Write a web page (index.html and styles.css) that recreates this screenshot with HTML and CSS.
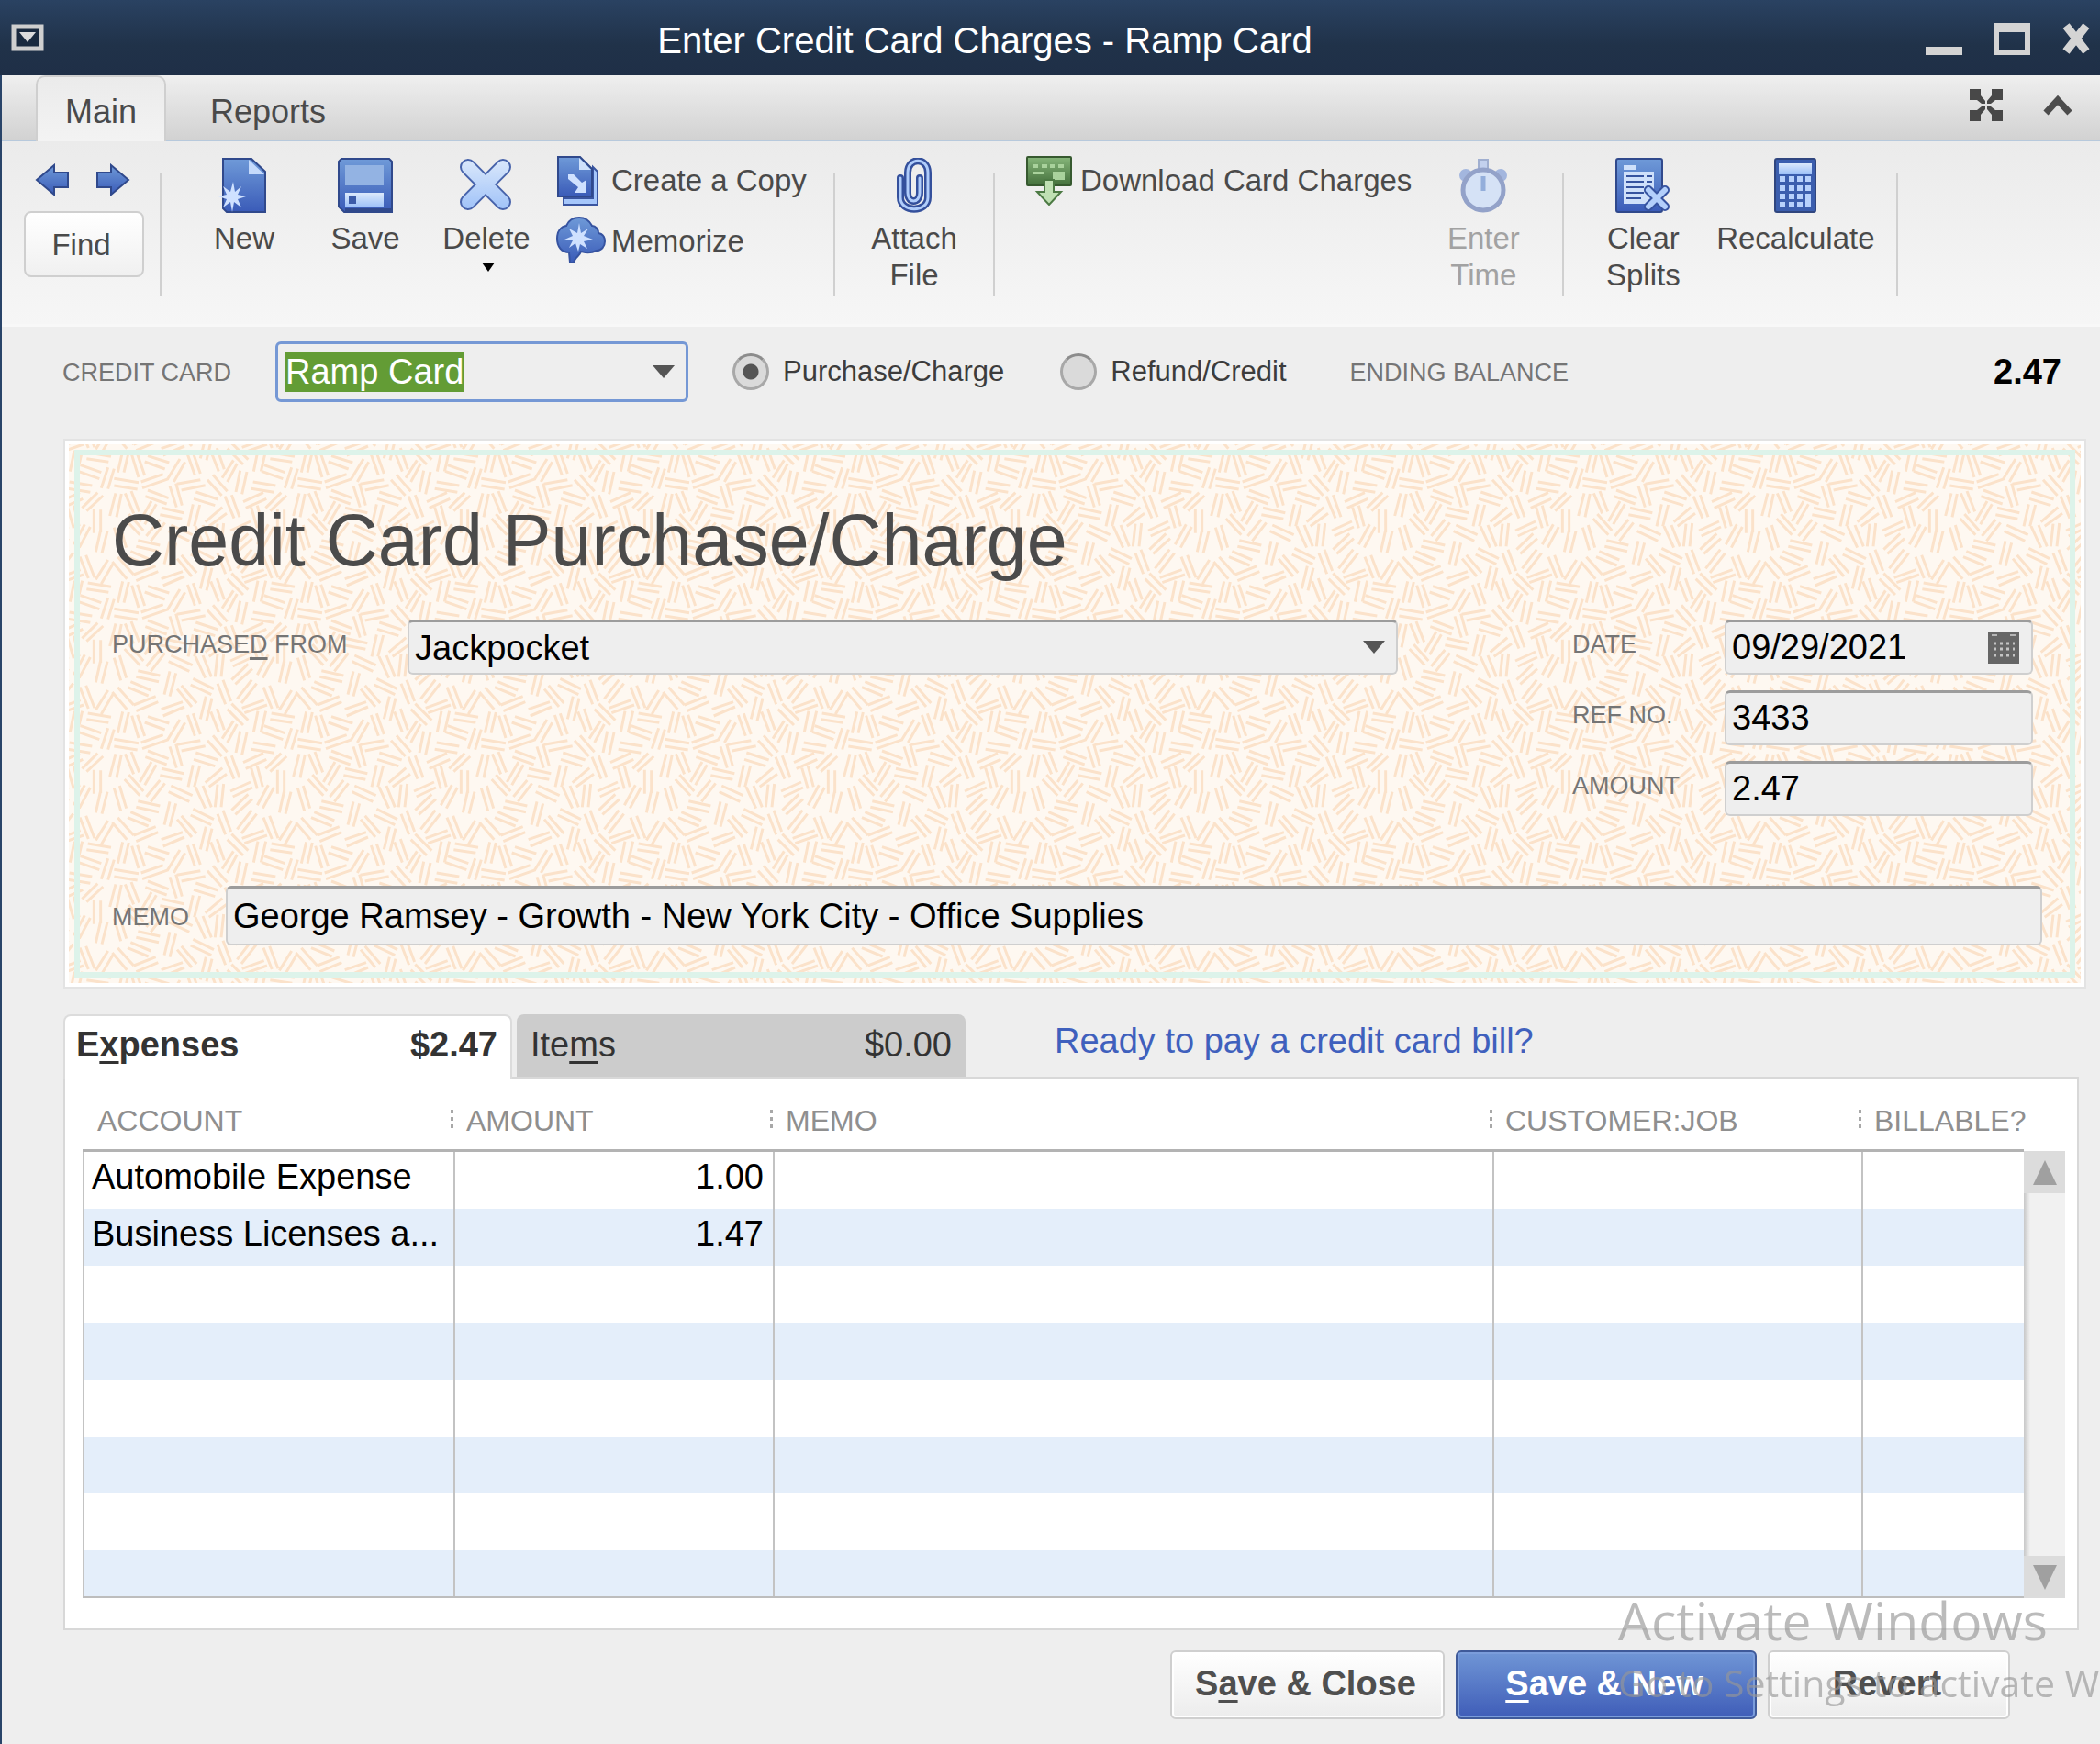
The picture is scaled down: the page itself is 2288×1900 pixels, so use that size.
FILE: index.html
```html
<!DOCTYPE html>
<html lang="en">

<head>
	<meta charset="utf-8">
	<meta name="viewport" content="width=device-width,initial-scale=1">
	<title>Enter Credit Card Charges - Ramp Card</title>
	<link rel="stylesheet" href="styles.css">
</head>

<body>
	<!-- shared icon gradients -->
	<svg class="defs" width="0" height="0" aria-hidden="true">
		<defs>
			<linearGradient id="blue" x1="0" y1="0" x2="0" y2="1">
				<stop offset="0" stop-color="#6f9ad8" />
				<stop offset="1" stop-color="#3a5bb8" />
			</linearGradient>
			<linearGradient id="light" x1="0" y1="0" x2="0" y2="1">
				<stop offset="0" stop-color="#dce9fb" />
				<stop offset="1" stop-color="#9cc0f8" />
			</linearGradient>
			<linearGradient id="cross" gradientUnits="userSpaceOnUse" x1="0" y1="0" x2="0" y2="60">
				<stop offset="0" stop-color="#dce9fb" />
				<stop offset="1" stop-color="#9cc0f8" />
			</linearGradient>
			<linearGradient id="green" x1="0" y1="0" x2="0" y2="1">
				<stop offset="0" stop-color="#86b67a" />
				<stop offset="1" stop-color="#44703c" />
			</linearGradient>
		</defs>
	</svg>

	<div class="window">
		<header class="titlebar">
			<button class="title-btn" aria-label="Window menu">
				<svg width="36" height="30" viewBox="0 0 36 30">
					<rect x="3" y="3" width="30" height="24" fill="#1a2a3f" stroke="#cfcfcf" stroke-width="5" />
					<path d="M9 9H27L18 20Z" fill="#dcdcdc" />
				</svg>
			</button>
			<h1>Enter Credit Card Charges - Ramp Card</h1>
			<div class="title-controls">
				<button class="title-btn" aria-label="Minimize">
					<svg width="40" height="38" viewBox="0 0 40 38"><rect y="26" width="40" height="9" fill="#d4d4d4" /></svg>
				</button>
				<button class="title-btn" aria-label="Maximize">
					<svg width="40" height="38" viewBox="0 0 40 38"><path d="M0 0H40V35H0ZM6 10V30H34V10Z" fill="#d4d4d4" fill-rule="evenodd" /></svg>
				</button>
				<button class="title-btn" aria-label="Close">
					<svg width="32" height="38" viewBox="0 0 32 38"><path d="M5 3L27 31M27 3L5 31" stroke="#d4d4d4" stroke-width="9" /></svg>
				</button>
			</div>
		</header>

		<nav class="tabstrip">
			<button class="tab active">Main</button>
			<button class="tab">Reports</button>
			<div class="strip-tools">
				<button class="plain" aria-label="Expand">
					<svg width="36" height="36" viewBox="0 0 36 36" fill="#484848">
						<path d="M0 0H12V7L17 13V16H13L8 12H0ZM36 0H24V7L19 13V16H23L28 12H36ZM0 35H12V28L17 22V19H13L8 23H0ZM36 35H24V28L19 22V19H23L28 23H36Z" />
					</svg>
				</button>
				<button class="plain" aria-label="Collapse ribbon">
					<svg width="32" height="24" viewBox="0 0 32 24"><path d="M3 20L16 6L29 20" fill="none" stroke="#4c4c4c" stroke-width="7" /></svg>
				</button>
			</div>
		</nav>

		<div class="toolbar">
			<div class="nav-group">
				<div class="arrows">
					<button class="plain" aria-label="Previous">
						<svg width="38" height="36" viewBox="0 0 38 36"><path d="M2 18L21 2V10H36V26H21V34Z" fill="url(#blue)" stroke="#30498c" stroke-width="2" /></svg>
					</button>
					<button class="plain" aria-label="Next">
						<svg width="38" height="36" viewBox="0 0 38 36"><path d="M36 18L17 2V10H2V26H17V34Z" fill="url(#blue)" stroke="#30498c" stroke-width="2" /></svg>
					</button>
				</div>
				<button class="find">Find</button>
			</div>
			<span class="sep"></span>
			<div class="group">
				<button class="tool">
					<svg width="56" height="60" viewBox="0 0 56 60">
						<path d="M5 1H36L51 15V59H9L5 55Z" fill="url(#blue)" stroke="#30498c" stroke-width="2" />
						<path d="M33 2L50 18H33Z" fill="#c5dafb" />
						<path d="M16 26L18 37L25 31L21 40L30 42L21 45L25 54L17 48L15 59L13 48L5 54L9 45L0 42L9 40L5 31L13 37Z" fill="#cfe1ff" />
					</svg>
					New
				</button>
				<button class="tool">
					<svg width="60" height="60" viewBox="0 0 60 60">
						<path d="M1 4L4 1H56L59 4V59H7L1 53Z" fill="url(#blue)" stroke="#30498c" stroke-width="2" />
						<rect x="8" y="8" width="42" height="22" fill="#93b3e3" />
						<rect x="8" y="38" width="42" height="16" fill="url(#light)" />
						<rect x="12" y="42" width="8" height="8" fill="#3c5ba8" />
						<rect x="8" y="55" width="50" height="3" fill="#30498c" />
					</svg>
					Save
				</button>
				<button class="tool">
					<svg width="60" height="60" viewBox="0 0 60 60" stroke-linecap="round">
						<path d="M10 10L48 48M48 10L10 48" stroke="#4763ab" stroke-width="18" />
						<path d="M10 10L48 48M48 10L10 48" stroke="url(#cross)" stroke-width="14" />
					</svg>
					Delete
					<svg class="caret" width="14" height="10" viewBox="0 0 14 10"><path d="M0 0H14L7 10Z" /></svg>
				</button>
			</div>
			<div class="stack">
				<button class="tool-row">
					<svg width="54" height="54" viewBox="0 0 54 54">
						<path d="M8 46V53H45V17L40 12V46Z" fill="#a5c6fb" stroke="#3a55a0" stroke-width="2" />
						<path d="M2 1H26L39 14V44H2Z" fill="url(#blue)" stroke="#30498c" stroke-width="2" />
						<path d="M25 2L38 15H25Z" fill="#cfe1fb" />
						<path d="M13 20L19 20L28 29L33 26V40H20L24 34L13 25Z" fill="#cfe1ff" />
					</svg>
					Create a Copy
				</button>
				<button class="tool-row">
					<svg width="54" height="54" viewBox="0 0 54 54">
						<path d="M15 50L14 39C6 39 1 33 1 24C1 16 5 11 11 10C14 3 19 1 25 1C31 1 36 4 39 10C43 10 46 14 46 18C51 19 53 22 53 27C53 33 49 37 44 37C36 41 31 39 27 38C26 42 20 45 19 50Z" fill="url(#blue)" stroke="#3653a0" stroke-width="2" />
						<path d="M25 7L27 18L35 13L30 21L40 25L30 27L34 35L26 30L24 38L21 29L14 34L18 26L9 25L18 21L14 13L23 18Z" fill="#cfe1ff" />
					</svg>
					Memorize
				</button>
			</div>
			<span class="sep"></span>
			<div class="group attach">
				<button class="tool">
					<svg width="40" height="60" viewBox="0 0 40 60" fill="none" stroke-linecap="round">
						<path d="M5 22V43C5 60 35 60 35 43V16C35 -1 13 -1 13 16V38C13 50 26 50 26 38V22" stroke="#34509c" stroke-width="8" />
						<path d="M5 22V43C5 60 35 60 35 43V16C35 -1 13 -1 13 16V38C13 50 26 50 26 38V22" stroke="#b0cdfb" stroke-width="3" />
					</svg>
					Attach<br>File
				</button>
			</div>
			<span class="sep"></span>
			<div class="group charges">
				<button class="tool-row">
					<svg width="54" height="54" viewBox="0 0 54 54">
						<rect x="2" y="1" width="48" height="31" rx="1" fill="url(#green)" stroke="#36592f" stroke-width="2" />
						<path d="M8 9H14V13H8ZM18 9H24V13H18ZM27 9H32V13H27ZM36 9H42V13H36ZM8 17H20V20H8ZM30 17H43V26H30Z" fill="#a9d29c" />
						<path d="M21 26H31V39H39L26 53L13 39H21Z" fill="#bfe0b3" stroke="#4c7a44" stroke-width="2" />
					</svg>
					Download Card Charges
				</button>
				<button class="tool" disabled>
					<svg width="56" height="60" viewBox="0 0 56 60">
						<path d="M23 2H33V14H23Z" fill="#c3d1ee" stroke="#a0afd0" stroke-width="2" />
						<circle cx="9" cy="19" r="7" fill="#a3b6de" />
						<circle cx="47" cy="19" r="7" fill="#a3b6de" />
						<ellipse cx="28" cy="35" rx="22" ry="22" fill="#d5e2f6" stroke="#93a2c9" stroke-width="5" />
						<path d="M28 20V36" stroke="#93aedb" stroke-width="5" />
					</svg>
					Enter<br>Time
				</button>
			</div>
			<span class="sep"></span>
			<div class="group splits">
				<button class="tool">
					<svg width="60" height="60" viewBox="0 0 60 60">
						<rect x="1" y="1" width="50" height="58" rx="2" fill="url(#blue)" stroke="#30498c" stroke-width="2" />
						<path d="M9 8H22V13H9ZM9 15H42V50H9Z" fill="#cfe0fa" />
						<path d="M12 20H31M34 20H40M12 26H31M34 26H40M12 32H31M34 32H38M12 38H31M12 44H28" stroke="#36539f" stroke-width="2" />
						<g stroke-linecap="round">
							<path d="M36 35L54 53M54 35L36 53" stroke="#3653a0" stroke-width="10" />
							<path d="M36 35L54 53M54 35L36 53" stroke="#b3cffb" stroke-width="6" />
						</g>
					</svg>
					Clear<br>Splits
				</button>
				<button class="tool">
					<svg width="46" height="60" viewBox="0 0 46 60">
						<rect x="1" y="1" width="44" height="58" rx="2" fill="#3b5eae" stroke="#30467f" stroke-width="2" />
						<rect x="5" y="6" width="36" height="12" fill="url(#light)" />
						<path d="M6 20H12V26H6ZM16 20H22V26H16ZM25 20H31V26H25ZM34 20H40V26H34ZM6 30H12V36H6ZM16 30H22V36H16ZM25 30H31V36H25ZM34 30H40V36H34ZM6 39H12V45H6ZM16 39H22V45H16ZM25 39H31V45H25ZM6 48H12V54H6ZM16 48H22V54H16ZM25 48H31V54H25ZM34 39H40V54H34Z" fill="#b7d1fc" />
					</svg>
					Recalculate
				</button>
			</div>
			<span class="sep"></span>
		</div>

		<div class="card-row">
			<label class="caption" for="card">CREDIT CARD</label>
			<div class="combo focused">
				<input id="card" type="text" role="combobox" aria-expanded="false" value="Ramp Card">
				<button class="plain drop" aria-label="Choose card"></button>
			</div>
			<label class="radio"><input type="radio" name="kind" checked>Purchase/Charge</label>
			<label class="radio"><input type="radio" name="kind">Refund/Credit</label>
			<span class="caption">ENDING BALANCE</span>
			<strong class="balance">2.47</strong>
		</div>

		<section class="charge">
			<div class="paper">
				<div class="frame">
					<h2>Credit Card Purchase/Charge</h2>
					<div class="fields">
						<label class="caption vendor-label" for="vendor">PURCHASE<u>D</u> FROM</label>
						<div class="vendor">
							<select id="vendor" class="field">
								<option>Jackpocket</option>
							</select>
						</div>
						<div class="details">
							<label class="caption" for="date">DATE</label>
							<div class="field date">
								<input id="date" type="text" value="09/29/2021">
								<button class="plain" aria-label="Pick date">
									<svg width="34" height="34" viewBox="0 0 34 34">
										<path d="M0 0H34V34H0Z" fill="#666" />
										<path d="M4 3H10M24 3H30" stroke="#b5b5b5" stroke-width="2" />
										<path d="M6 12H29M6 18H29M6 25H29" stroke="#c4c4c4" stroke-width="3" stroke-dasharray="3 4" />
									</svg>
								</button>
							</div>
							<label class="caption" for="refno">REF NO.</label>
							<input id="refno" class="field" type="text" value="3433">
							<label class="caption" for="amount">AMOUNT</label>
							<input id="amount" class="field" type="text" value="2.47">
						</div>
					</div>
					<div class="memo-row">
						<label class="caption" for="memo">MEMO</label>
						<input id="memo" class="field" type="text" value="George Ramsey - Growth - New York City - Office Supplies">
					</div>
				</div>
			</div>
		</section>

		<div class="split-tabs">
			<button class="split-tab active"><span>E<u>x</u>penses</span><span>$2.47</span></button>
			<button class="split-tab"><span>Ite<u>m</u>s</span><span>$0.00</span></button>
			<a href="#">Ready to pay a credit card bill?</a>
		</div>
		<section class="split-panel">
			<div class="grid">
				<table>
					<thead>
						<tr>
							<th class="col-account">ACCOUNT</th>
							<th class="col-amount">AMOUNT</th>
							<th class="col-memo">MEMO</th>
							<th class="col-job">CUSTOMER:JOB</th>
							<th class="col-billable">BILLABLE?</th>
						</tr>
					</thead>
					<tbody>
						<tr><td>Automobile Expense</td><td class="num">1.00</td><td></td><td></td><td></td></tr>
						<tr><td>Business Licenses a...</td><td class="num">1.47</td><td></td><td></td><td></td></tr>
						<tr><td></td><td></td><td></td><td></td><td></td></tr>
						<tr><td></td><td></td><td></td><td></td><td></td></tr>
						<tr><td></td><td></td><td></td><td></td><td></td></tr>
						<tr><td></td><td></td><td></td><td></td><td></td></tr>
						<tr><td></td><td></td><td></td><td></td><td></td></tr>
						<tr><td></td><td></td><td></td><td></td><td></td></tr>
					</tbody>
				</table>
			</div>
			<div class="scrollbar">
				<button class="plain" aria-label="Scroll up"><svg width="26" height="27" viewBox="0 0 26 27"><path d="M13 0L26 27H0Z" fill="#a0a0a0" /></svg></button>
				<button class="plain" aria-label="Scroll down"><svg width="26" height="27" viewBox="0 0 26 27"><path d="M13 27L26 0H0Z" fill="#a0a0a0" /></svg></button>
			</div>
		</section>

		<footer class="actions">
			<button class="action close">S<u>a</u>ve &amp; Close</button>
			<button class="action primary"><u>S</u>ave &amp; New</button>
			<button class="action revert">Revert</button>
		</footer>
	</div>

	<div class="activate">
		<div class="activate-title">Activate Windows</div>
		<div class="activate-text">Go to Settings to activate Windows.</div>
	</div>

	<script src="script.js"></script>
</body>

</html>
```
FILE: styles.css
```css
* {
	box-sizing: border-box;
}

body {
	margin: 0;
	background: #eee;
	color: #4a4a4a;
	font-family: "Liberation Sans", Arial, sans-serif;
	font-size: 33px;
	overflow: hidden;
}

button,
input,
select {
	font: inherit;
	color: inherit;
	margin: 0;
}

button {
	cursor: pointer;
}

svg {
	display: block;
}

u {
	text-decoration-thickness: 3px;
	text-underline-offset: 5px;
}

.defs {
	position: absolute;
}

.window {
	display: flex;
	flex-direction: column;
	min-height: 100vh;
	border-left: 2px solid #294469;
}

.plain,
.title-btn {
	padding: 0;
	border: 0;
	background: none;
}

/* title bar */
.titlebar {
	display: flex;
	align-items: center;
	height: 82px;
	margin-left: -2px;
	padding: 0 10px 0 12px;
	background: linear-gradient(#2a4262, #203249 60%, #1f2f47);
}

.titlebar h1 {
	flex: 1;
	margin: 0;
	padding-top: 6px;
	color: #fff;
	font-size: 40px;
	font-weight: normal;
	text-align: center;
}

.title-controls {
	display: flex;
	gap: 34px;
	padding-top: 20px;
	padding-bottom: 14px;
}

/* tabs */
.tabstrip {
	display: flex;
	height: 72px;
	padding: 0 30px 0 37px;
	border-bottom: 2px solid #b7c9dc;
	background: linear-gradient(#efefef, #d2d2d2);
}

.tab {
	height: 72px;
	padding: 6px 30px 0;
	border: 2px solid transparent;
	border-bottom: 0;
	background: none;
	font-size: 36px;
}

.tab.active {
	margin-right: 16px;
	border-color: #cfcfcf;
	border-radius: 10px 10px 0 0;
	background: linear-gradient(#ebebeb, #f3f3f3);
}

.strip-tools {
	display: flex;
	align-items: center;
	gap: 44px;
	margin-left: auto;
	padding-bottom: 4px;
}

/* toolbar */
.toolbar {
	display: flex;
	align-items: flex-start;
	height: 202px;
	border-bottom: 3px solid #f8f8f8;
	background: linear-gradient(#ebebeb, #f6f6f6);
}

.nav-group {
	width: 172px;
	padding: 24px 17px 0 24px;
}

.arrows {
	display: flex;
	gap: 28px;
	padding-left: 12px;
}

.find {
	width: 100%;
	height: 72px;
	margin-top: 16px;
	padding: 2px 6px 0 0;
	border: 2px solid #cfcfcf;
	border-radius: 8px;
	background: linear-gradient(#fff, #f0f0f0);
}

.sep {
	width: 2px;
	height: 134px;
	margin-top: 34px;
	background: #d0d0d0;
}

.group {
	display: flex;
	align-items: flex-start;
}

.sep + .group {
	padding-left: 24px;
}

.tool {
	display: flex;
	flex-direction: column;
	align-items: center;
	width: 132px;
	padding: 18px 0 0;
	border: 0;
	background: none;
	line-height: 40px;
}

.tool svg {
	margin-bottom: 8px;
}

.tool .caret {
	margin: 6px 0 0 4px;
}

.tool:disabled {
	color: #a2a2a2;
}

.stack {
	display: flex;
	flex-direction: column;
	gap: 12px;
	width: 312px;
	padding: 16px 0 0 10px;
}

.tool-row {
	display: flex;
	align-items: center;
	gap: 6px;
	padding: 0;
	border: 0;
	background: none;
	white-space: nowrap;
}

.sep + .attach {
	padding: 0 20px;
}

.sep + .charges {
	gap: 12px;
	padding: 0 20px 0 33px;
}

.charges .tool-row {
	margin-top: 16px;
}

.sep + .splits {
	padding: 0 10px 0 20px;
}

.splits .tool + .tool {
	width: 200px;
}

/* card selector */
.card-row {
	display: flex;
	align-items: center;
	padding: 16px 42px 40px 66px;
}

.caption {
	color: #757575;
	font-size: 27px;
}

.card-row .caption {
	padding-top: 2px;
}

.combo {
	display: flex;
	align-items: center;
	width: 450px;
	height: 66px;
	margin: 0 48px 0 48px;
	padding: 0 12px 0 8px;
	border: 3px solid #7598d5;
	border-radius: 6px;
}

.combo input {
	flex: 1;
	min-width: 0;
	padding: 0;
	border: 0;
	outline: 0;
	background: none;
	color: #000;
	font-size: 38px;
}

.combo input::selection {
	background: #639c35;
	color: #fff;
}

.drop {
	width: 24px;
	height: 14px;
	background: #555;
	clip-path: polygon(0 0, 100% 0, 50% 100%);
}

.radio {
	display: flex;
	align-items: center;
	gap: 15px;
	margin-right: 61px;
	color: #3c3c3c;
	font-size: 31px;
}

.radio input {
	appearance: none;
	width: 40px;
	height: 40px;
	border: 3px solid #a8a8a8;
	border-top-color: #8c8c8c;
	border-radius: 50%;
	background: #dadada;
}

.radio input:checked {
	background: radial-gradient(circle, #555 8px, #dadada 9px);
}

.radio + .caption {
	margin-left: 8px;
}

.balance {
	margin-left: auto;
	color: #000;
	font-size: 38px;
}

/* charge form */
.charge {
	margin: 0 15px 0 67px;
	padding: 4px;
	border: 2px solid #e3e3e3;
	background: #fff;
}

.paper {
	padding: 6px;
	background: #fef8f1 url("data:image/svg+xml,%3Csvg xmlns='http://www.w3.org/2000/svg' xmlns:xlink='http://www.w3.org/1999/xlink' width='200' height='142' viewBox='0 0 600 426'%3E%3Cdefs%3E%3Cpath id='s' d='M20 501L52 441M3 488L40 430M48 108L62 38M68 115L84 42M106 467L120 398M130 467L146 398M140 20L208 44M132 40L202 65M164 405L240 418M160 425L232 436M104 75L178 87M98 97L172 109M208 95L230 28M230 98L250 32M262 470L278 400M282 470L298 402M308 413L330 486M326 410L350 480M250 64L330 77M250 87L326 99M338 75L410 50M342 95L428 65M360 416L430 438M350 435L416 459M425 491L465 426M445 501L482 436M490 411L514 479M508 406L532 474M455 82L532 68M470 102L548 86M432 88L454 158M452 80L472 152M360 102L428 128M352 122L422 147M555 68L602 120M573 52L620 106M566 400L592 467M586 390L610 460M517 108L590 132M510 130L580 152M492 220L508 148M512 220L530 150M548 206L604 158M560 220L618 178M72 140L138 110M80 160L148 130M145 160L196 110M160 170L214 120M236 186L255 112M258 190L274 114M286 112L314 178M306 105L332 172M12 122L42 194M34 118L60 190M98 158L118 226M118 152L136 220M184 164L184 242M206 166L206 240M334 204L372 138M350 214L388 148M405 160L478 176M400 182L472 196M284 195L334 248M298 180L346 234M355 252L400 198M370 268L416 208M436 216L506 248M428 236L496 268M516 220L548 290M540 216L568 286M580 286L588 212M600 286L608 210M30 234L96 204M38 252L102 222M34 296L88 244M46 310L102 260M118 280L154 214M136 290L172 222M190 304L206 232M210 308L228 236M250 224L272 298M268 216L290 290M328 266L400 282M322 286L396 302M304 302L370 330M294 320L362 348M414 344L432 268M432 350L452 274M508 292L576 326M500 312L568 344M456 326L504 384M470 314L520 372M588 308L614 376M606 296L632 366M52 358L100 296M66 372L116 308M138 320L166 390M158 314L186 388M190 394L230 330M208 408L248 340M244 336L292 392M262 320L314 378M314 378L386 350M322 398L394 368M404 392L474 368M410 414L480 384M532 424L550 350M552 430L570 356M20 392L72 444M34 374L88 428M68 388L140 362M76 404L150 378' fill='none' stroke='%23fbe2ca' stroke-width='9'/%3E%3C/defs%3E%3Cuse xlink:href='%23s'/%3E%3Cuse xlink:href='%23s' x='-600'/%3E%3Cuse xlink:href='%23s' y='-426'/%3E%3Cuse xlink:href='%23s' x='-600' y='-426'/%3E%3C/svg%3E") -34px 16px;
}

.frame {
	padding: 48px 30px 29px 35px;
	border: 6px solid #ddf3ea;
}

.frame h2 {
	margin: 0 0 41px;
	color: #4b4b4b;
	font-size: 79px;
	font-weight: normal;
	line-height: 90px;
}

.fields {
	display: flex;
	align-items: flex-start;
	margin-right: 10px;
}

.fields .caption {
	line-height: 54px;
}

.vendor-label {
	width: 322px;
}

.field {
	width: 100%;
	height: 60px;
	padding: 0 6px;
	border: 2px solid #cfcfcf;
	border-top: 3px solid #9c9c9c;
	border-radius: 6px;
	background: #eee;
	color: #000;
	font-size: 38px;
}

.vendor {
	position: relative;
	flex: 1;
	margin-right: 190px;
}

.vendor::after {
	content: "";
	position: absolute;
	top: 23px;
	right: 14px;
	width: 24px;
	height: 14px;
	background: #555;
	clip-path: polygon(0 0, 100% 0, 50% 100%);
	pointer-events: none;
}

.vendor select {
	appearance: none;
}

.details {
	display: grid;
	grid-template-columns: 166px 336px;
	row-gap: 17px;
}

.date {
	display: flex;
	align-items: center;
	padding-right: 13px;
}

.date input {
	flex: 1;
	min-width: 0;
	padding: 0;
	border: 0;
	background: none;
}

.memo-row {
	display: flex;
	align-items: center;
	margin-top: 76px;
}

.memo-row .caption {
	width: 124px;
	padding-top: 4px;
}

.memo-row .field {
	flex: 1;
	height: 65px;
}

/* expenses / items */
.split-tabs {
	display: flex;
	gap: 5px;
	margin: 28px 23px 0 67px;
}

.split-tab {
	display: flex;
	justify-content: space-between;
	align-items: center;
	width: 489px;
	height: 68px;
	padding: 0 15px 2px;
	border: 0;
	border-radius: 8px 8px 0 0;
	background: #ccc;
	color: #333;
	font-size: 38px;
}

/* overlaps the panel border so that the two join */
.split-tab.active {
	position: relative;
	z-index: 1;
	height: 70px;
	margin-bottom: -2px;
	padding: 0 14px 6px 12px;
	border: 2px solid #dcdcdc;
	border-bottom: 0;
	background: #fff;
	font-weight: bold;
}

.split-tabs a {
	margin: 8px 0 0 92px;
	color: #3f60bd;
	font-size: 38px;
	text-decoration: none;
}

.split-panel {
	display: flex;
	flex: 1 1 0;
	min-height: 603px;
	margin: 0 23px 0 67px;
	padding: 0 13px 33px 19px;
	border: 2px solid #d8d8d8;
	background: #fff;
}

.grid {
	flex: 1;
	height: 566px;
	border-bottom: 2px solid #bdbdbd;
	overflow-x: visible;
	overflow-y: clip;
}

table {
	width: 100%;
	table-layout: fixed;
	border-spacing: 0;
}

th {
	height: 80px;
	padding: 16px 0 0;
	border-bottom: 3px solid #b3b3b3;
	color: #8f8f8f;
	font-size: 32px;
	font-weight: normal;
	text-align: left;
	white-space: nowrap;
}

th::before {
	content: "";
	display: inline-block;
	width: 3px;
	height: 20px;
	margin: 0 14px 3px -3px;
	background: repeating-linear-gradient(#a8a8a8 0 4px, transparent 4px 8px);
}

.col-account {
	width: 404px;
	padding-left: 16px;
}

.col-account::before {
	display: none;
}

.col-amount {
	width: 348px;
}

.col-job {
	width: 402px;
}

.col-billable {
	width: 177px;
}

td {
	height: 62px;
	padding: 0 10px 8px 8px;
	border-left: 2px solid #c3c3c3;
	color: #000;
	font-size: 38px;
	white-space: nowrap;
}

tbody tr:nth-child(even) {
	background: #e4eefa;
}

.num {
	text-align: right;
}

.scrollbar {
	display: flex;
	flex-direction: column;
	justify-content: space-between;
	width: 45px;
	height: 487px;
	margin-top: 79px;
	background: linear-gradient(90deg, #c8c8c8, #f1f1f1 7px);
}

.scrollbar button {
	display: grid;
	place-items: center;
	height: 46px;
	background: #dcdcdc;
}

/* footer */
.actions {
	display: flex;
	justify-content: flex-end;
	gap: 12px;
	padding: 22px 98px 27px;
}

.action {
	height: 75px;
	padding: 0 4px 2px 0;
	border: 2px solid #cfcfcf;
	border-radius: 6px;
	background: linear-gradient(#fff, #ececec);
	box-shadow: inset 0 0 0 2px #fff;
	color: #4f4f4f;
	font-size: 38px;
	font-weight: bold;
}

.action.close {
	width: 299px;
}

.action.primary {
	width: 328px;
	border-color: #3f5a9a;
	background: linear-gradient(#7096d6, #3f5db8);
	box-shadow: inset 0 0 0 2px #7b9ddb;
	color: #fff;
}

.action.revert {
	width: 264px;
}

/* desktop watermark drawn over the window */
.activate {
	position: fixed;
	right: 0;
	bottom: 38px;
	width: 525px;
	overflow: hidden;
	color: rgba(150, 150, 150, .65);
	font-family: "Open Sans", "Noto Sans", sans-serif;
	white-space: nowrap;
	pointer-events: none;
}

.activate-title {
	font-size: 57px;
	line-height: 78px;
}

.activate-text {
	font-size: 41px;
	line-height: 58px;
}
```
FILE: script.js
```js
// the card field opens focused with its text selected
const card = document.getElementById("card");
card.focus();
card.select();
```
